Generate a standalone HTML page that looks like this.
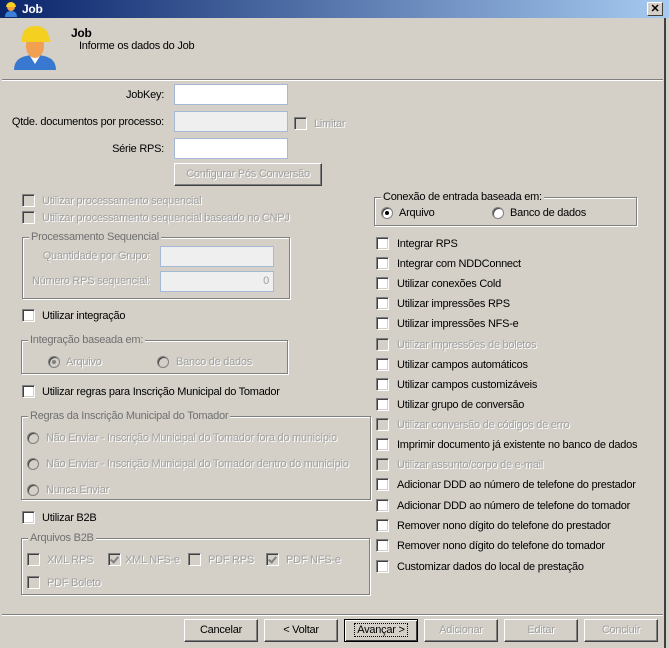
<!DOCTYPE html>
<html><head><meta charset="utf-8"><style>
*{margin:0;padding:0;box-sizing:border-box}
body{width:669px;height:648px;background:#d4d0c8;font-family:"Liberation Sans",sans-serif;font-size:11px;letter-spacing:-0.25px;color:#000;position:relative;overflow:hidden}
.a{position:absolute;white-space:nowrap}
.t{position:absolute;white-space:nowrap;line-height:13px}
.d{color:#a0a0a0;text-shadow:1px 1px 0 #fff}
.cb{position:absolute;width:13px;height:13px;background:#fff;border:1px solid;border-color:#808080 #fff #fff #808080;box-shadow:inset 1px 1px 0 #404040,inset -1px -1px 0 #d4d0c8}
.cb.x{background:#d4d0c8}
.cb.k::after{content:"";position:absolute;left:3px;top:1px;width:3px;height:6px;border:solid #808080;border-width:0 2px 2px 0;transform:rotate(40deg)}
.rd{position:absolute;width:12px;height:12px;border-radius:50%;background:#fff;border:1px solid #808080;box-shadow:inset 1px 1px 0 #404040}
.rd.x{background:#d4d0c8}
.rd.on::after{content:"";position:absolute;left:3px;top:3px;width:4px;height:4px;border-radius:50%;background:#000}
.rd.x.on::after{background:#808080}
.in{position:absolute;height:21px;background:#fff;border:1px solid #a5b8d6}
.in.x{background:#efefef}
.fs{position:absolute;border:1px solid #808080;box-shadow:1px 1px 0 #fff inset,1px 1px 0 #fff}
.lg{position:absolute;background:#d4d0c8;padding:0 2px;line-height:12px;top:-7px;left:6px}
.btn{position:absolute;height:23px;width:74px;background:#d4d0c8;border:1px solid;border-color:#fff #404040 #404040 #fff;box-shadow:inset -1px -1px 0 #808080;text-align:center;line-height:21px}
</style></head><body>
<div class="a" style="left:0;top:0;width:669px;height:18px;background:linear-gradient(90deg,#0a246a,#a6caf0)"></div>
<svg class="a" style="left:4px;top:1px" width="14" height="16" viewBox="0 0 14 16"><circle cx="7" cy="6" r="4" fill="#f0a040"/><path d="M2 6a5 5 0 0110 0z" fill="#f5d020"/><path d="M1 16q0-6 6-6t6 6z" fill="#3a80d8"/></svg>
<div class="a" style="left:22px;top:2px;color:#fff;font-weight:bold;font-size:12px">Job</div>
<div class="a" style="left:647px;top:2px;width:16px;height:14px;background:#d4d0c8;border:1px solid;border-color:#fff #404040 #404040 #fff;text-align:center;font-size:11px;font-weight:bold;line-height:12px">✕</div>
<div class="a" style="left:664px;top:18px;width:2px;height:630px;background:#404040"></div>
<div class="a" style="left:666px;top:18px;width:3px;height:630px;background:#d4d0c8"></div>
<svg class="a" style="left:12px;top:24px" width="46" height="48" viewBox="0 0 46 48"><path d="M2 46q0-15 21-15t21 15z" fill="#3878d0"/><path d="M18 32l5 8 5-8z" fill="#fff"/><ellipse cx="23" cy="22" rx="9" ry="12" fill="#f0a050"/><path d="M10 16q0-14 13-14t14 12l2 4H10z" fill="#f4d020"/></svg>
<div class="a" style="left:71px;top:26px;font-weight:bold;font-size:12px">Job</div>
<div class="a" style="left:79px;top:40px">Informe os dados do Job</div>
<div class="a" style="left:2px;top:79px;width:661px;height:2px;border-top:1px solid #808080;border-bottom:1px solid #fff"></div>

<div class="t" style="right:505px;top:89px">JobKey:</div>
<div class="in" style="left:174px;top:84px;width:114px"></div>
<div class="t" style="right:505px;top:116px">Qtde. documentos por processo:</div>
<div class="in x" style="left:174px;top:111px;width:114px"></div>
<div class="cb x" style="left:294px;top:117px"></div><div class="t d" style="left:314px;top:118px">Limitar</div>
<div class="t" style="right:505px;top:143px">Série RPS:</div>
<div class="in" style="left:174px;top:138px;width:114px"></div>
<div class="btn d" style="left:174px;top:163px;width:148px">Configurar Pós Conversão</div>

<div class="cb x" style="left:22px;top:194px"></div><div class="t d" style="left:42px;top:195px">Utilizar processamento sequencial</div>
<div class="cb x" style="left:22px;top:211px"></div><div class="t d" style="left:42px;top:212px">Utilizar processamento sequencial baseado no CNPJ</div>
<div class="fs" style="left:22px;top:237px;width:268px;height:62px"><div class="lg" style="color:#707070">Processamento Sequencial</div></div>
<div class="t d" style="right:519px;top:250px">Quantidade por Grupo:</div>
<div class="in x" style="left:160px;top:246px;width:114px"></div>
<div class="t d" style="right:519px;top:275px">Número RPS sequencial:</div>
<div class="in x" style="left:160px;top:271px;width:114px;text-align:right;padding-right:4px;line-height:19px;color:#a0a0a0">0</div>

<div class="cb" style="left:22px;top:309px"></div><div class="t" style="left:42px;top:310px">Utilizar integração</div>
<div class="fs" style="left:21px;top:340px;width:267px;height:34px"><div class="lg" style="color:#707070">Integração baseada em:</div></div>
<div class="rd x on" style="left:48px;top:356px"></div><div class="t d" style="left:66px;top:356px">Arquivo</div>
<div class="rd x" style="left:157px;top:356px"></div><div class="t d" style="left:176px;top:356px">Banco de dados</div>
<div class="cb" style="left:22px;top:385px"></div><div class="t" style="left:42px;top:386px">Utilizar regras para Inscrição Municipal do Tomador</div>
<div class="fs" style="left:21px;top:416px;width:350px;height:84px"><div class="lg" style="color:#707070">Regras da Inscrição Municipal do Tomador</div></div>
<div class="rd x" style="left:27px;top:432px"></div><div class="t d" style="left:46px;top:432px">Não Enviar - Inscrição Municipal do Tomador fora do município</div>
<div class="rd x" style="left:27px;top:458px"></div><div class="t d" style="left:46px;top:458px">Não Enviar - Inscrição Municipal do Tomador dentro do município</div>
<div class="rd x" style="left:27px;top:484px"></div><div class="t d" style="left:46px;top:484px">Nunca Enviar</div>
<div class="cb" style="left:22px;top:511px"></div><div class="t" style="left:42px;top:512px">Utilizar B2B</div>
<div class="fs" style="left:21px;top:538px;width:349px;height:57px"><div class="lg" style="color:#707070">Arquivos B2B</div></div>
<div class="cb x" style="left:27px;top:553px"></div><div class="t d" style="left:47px;top:554px">XML RPS</div>
<div class="cb x k" style="left:108px;top:553px"></div><div class="t d" style="left:125px;top:554px">XML NFS-e</div>
<div class="cb x" style="left:188px;top:553px"></div><div class="t d" style="left:208px;top:554px">PDF RPS</div>
<div class="cb x k" style="left:266px;top:553px"></div><div class="t d" style="left:286px;top:554px">PDF NFS-e</div>
<div class="cb x" style="left:27px;top:576px"></div><div class="t d" style="left:47px;top:577px">PDF Boleto</div>

<div class="fs" style="left:374px;top:197px;width:263px;height:29px"><div class="lg">Conexão de entrada baseada em:</div></div>
<div class="rd on" style="left:381px;top:207px"></div><div class="t" style="left:399px;top:207px">Arquivo</div>
<div class="rd" style="left:492px;top:207px"></div><div class="t" style="left:510px;top:207px">Banco de dados</div>

<div class="cb" style="left:376px;top:237px"></div><div class="t" style="left:397px;top:238px">Integrar RPS</div>
<div class="cb" style="left:376px;top:257px"></div><div class="t" style="left:397px;top:258px">Integrar com NDDConnect</div>
<div class="cb" style="left:376px;top:277px"></div><div class="t" style="left:397px;top:278px">Utilizar conexões Cold</div>
<div class="cb" style="left:376px;top:297px"></div><div class="t" style="left:397px;top:298px">Utilizar impressões RPS</div>
<div class="cb" style="left:376px;top:317px"></div><div class="t" style="left:397px;top:318px">Utilizar impressões NFS-e</div>
<div class="cb x" style="left:376px;top:338px"></div><div class="t d" style="left:397px;top:339px">Utilizar impressões de boletos</div>
<div class="cb" style="left:376px;top:358px"></div><div class="t" style="left:397px;top:359px">Utilizar campos automáticos</div>
<div class="cb" style="left:376px;top:378px"></div><div class="t" style="left:397px;top:379px">Utilizar campos customizáveis</div>
<div class="cb" style="left:376px;top:398px"></div><div class="t" style="left:397px;top:399px">Utilizar grupo de conversão</div>
<div class="cb x" style="left:376px;top:418px"></div><div class="t d" style="left:397px;top:419px">Utilizar conversão de códigos de erro</div>
<div class="cb" style="left:376px;top:438px"></div><div class="t" style="left:397px;top:439px">Imprimir documento já existente no banco de dados</div>
<div class="cb x" style="left:376px;top:458px"></div><div class="t d" style="left:397px;top:459px">Utilizar assunto/corpo de e-mail</div>
<div class="cb" style="left:376px;top:478px"></div><div class="t" style="left:397px;top:479px">Adicionar DDD ao número de telefone do prestador</div>
<div class="cb" style="left:376px;top:499px"></div><div class="t" style="left:397px;top:500px">Adicionar DDD ao número de telefone do tomador</div>
<div class="cb" style="left:376px;top:519px"></div><div class="t" style="left:397px;top:520px">Remover nono dígito do telefone do prestador</div>
<div class="cb" style="left:376px;top:539px"></div><div class="t" style="left:397px;top:540px">Remover nono dígito do telefone do tomador</div>
<div class="cb" style="left:376px;top:560px"></div><div class="t" style="left:397px;top:561px">Customizar dados do local de prestação</div>

<div class="a" style="left:2px;top:614px;width:661px;height:2px;border-top:1px solid #808080;border-bottom:1px solid #fff"></div>
<div class="btn" style="left:184px;top:619px">Cancelar</div>
<div class="btn" style="left:264px;top:619px">&lt; Voltar</div>
<div class="btn" style="left:344px;top:619px;border:1px solid #000;box-shadow:inset 1px 1px 0 #fff,inset -1px -1px 0 #404040"><span style="outline:1px dotted #000;padding:0 2px">Avançar &gt;</span></div>
<div class="btn d" style="left:424px;top:619px">Adicionar</div>
<div class="btn d" style="left:504px;top:619px">Editar</div>
<div class="btn d" style="left:584px;top:619px">Concluir</div>
</body></html>
